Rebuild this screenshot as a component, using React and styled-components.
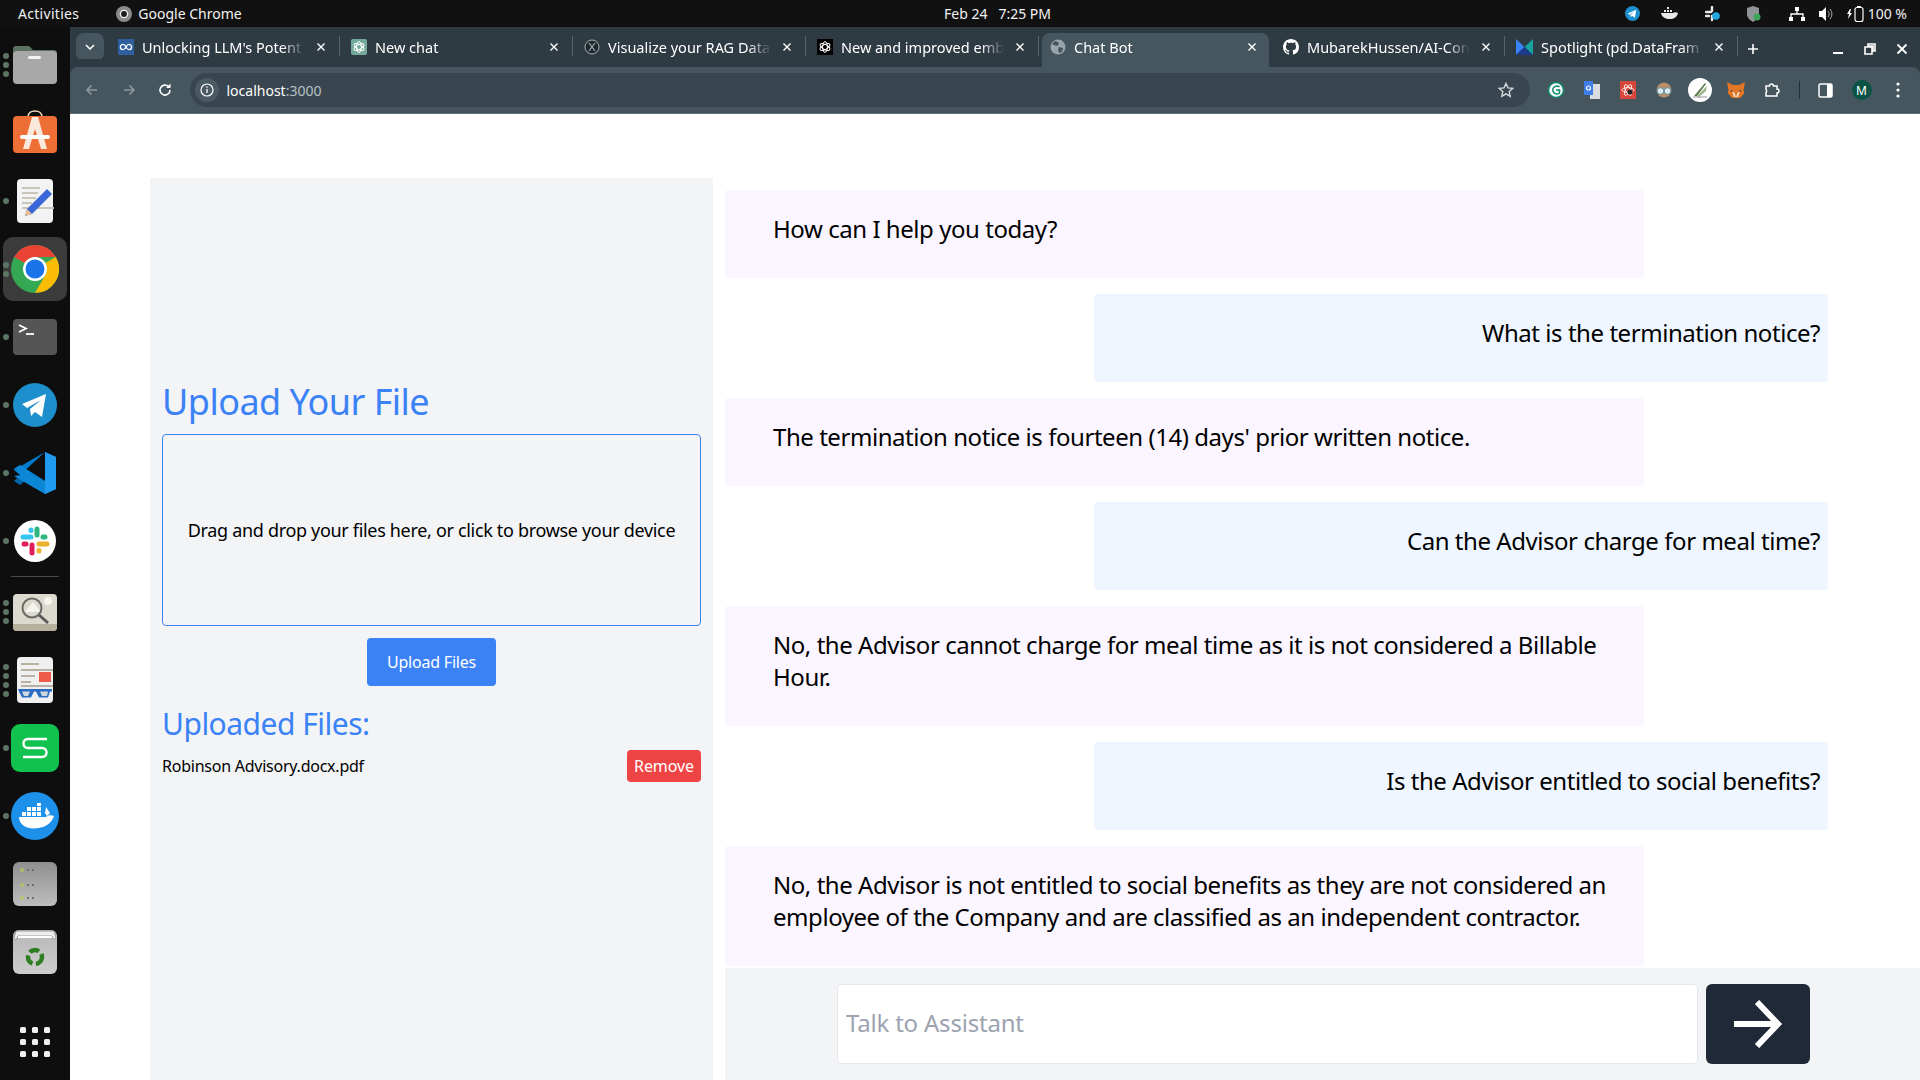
import styled, { createGlobalStyle } from 'styled-components';

const GlobalStyle = createGlobalStyle`
    html, body {
        margin: 0;
        padding: 0;
        height: 1080px;
        overflow: hidden;
        background: #ffffff;
        font-family: "Noto Sans", "Open Sans", sans-serif;
    }
    * {
        box-sizing: border-box;
    }
`

const GlobeIcon = () => (
    <svg width="16" height="16" viewBox="0 0 16 16">
        <circle cx="8" cy="8" r="7.5" fill="#9aa5ab" />
        <path d="M5 2l3 1 1 2-2 2-3-1-2-1zM9 8l4 1-1 4-3 1-1-3z" fill="#45565f" />
    </svg>
);

const OpenAiIcon = ({ bg }) => (
    <svg width="16" height="16" viewBox="0 0 16 16">
        <rect width="16" height="16" rx={bg === '#000000' ? 0 : 2} fill={bg} />
        <g fill="none" stroke="#ffffff" strokeWidth="1">
            <ellipse cx="8" cy="8" rx="2.4" ry="5.4" />
            <ellipse cx="8" cy="8" rx="2.4" ry="5.4" transform="rotate(60 8 8)" />
            <ellipse cx="8" cy="8" rx="2.4" ry="5.4" transform="rotate(120 8 8)" />
        </g>
    </svg>
);

const InfinityIcon = () => (
    <svg width="16" height="16" viewBox="0 0 16 16">
        <rect width="16" height="16" fill="#2f5f9e" />
        <path d="M8 8c-1-2-2-2.6-3-2.6a2.6 2.6 0 000 5.2c1 0 2-.6 3-2.6s2-2.6 3-2.6a2.6 2.6 0 010 5.2c-1 0-2-.6-3-2.6z" fill="none" stroke="#ffffff" strokeWidth="1.3" />
    </svg>
);

const XIcon = () => (
    <svg width="16" height="16" viewBox="0 0 16 16">
        <circle cx="8" cy="8" r="7" fill="#20282e" stroke="#aab2b7" strokeWidth="1" />
        <path d="M5 4l6 8M11 4l-6 8" stroke="#aab2b7" strokeWidth="1.2" />
    </svg>
);

const GithubIcon = () => (
    <svg width="16" height="16" viewBox="0 0 16 16">
        <path fill="#ffffff" d="M8 0C3.58 0 0 3.58 0 8c0 3.54 2.29 6.53 5.47 7.59.4.07.55-.17.55-.38 0-.19-.01-.82-.01-1.49-2.01.37-2.53-.49-2.69-.94-.09-.23-.48-.94-.82-1.13-.28-.15-.68-.52-.01-.53.63-.01 1.08.58 1.23.82.72 1.21 1.87.87 2.33.66.07-.52.28-.87.51-1.07-1.78-.2-3.64-.89-3.64-3.95 0-.87.31-1.59.82-2.15-.08-.2-.36-1.02.08-2.12 0 0 .67-.21 2.2.82.64-.18 1.32-.27 2-.27s1.36.09 2 .27c1.53-1.04 2.2-.82 2.2-.82.44 1.1.16 1.92.08 2.12.51.56.82 1.27.82 2.15 0 3.07-1.87 3.75-3.65 3.95.29.25.54.73.54 1.48 0 1.07-.01 1.93-.01 2.2 0 .21.15.46.55.38A8.01 8.01 0 0016 8c0-4.42-3.58-8-8-8z" />
    </svg>
);

const SpotlightIcon = () => (
    <svg width="17" height="16" viewBox="0 0 17 16">
        <path d="M0 0l8.5 8L0 16z" fill="#3b82f6" />
        <path d="M17 0L8.5 8 17 16z" fill="#16a3a0" />
        <path d="M0 16l8.5-8 8.5 8z" fill="#1e3a8a" />
    </svg>
);

// titles are what the tab strip shows before it fades them out
const tabs = [
    { title: "Unlocking LLM's Potent", icon: <InfinityIcon /> },
    { title: 'New chat', icon: <OpenAiIcon bg="#74aa9c" /> },
    { title: 'Visualize your RAG Data', icon: <XIcon /> },
    { title: 'New and improved emb', icon: <OpenAiIcon bg="#000000" /> },
    { title: 'Chat Bot', icon: <GlobeIcon />, active: true },
    { title: 'MubarekHussen/AI-Con', icon: <GithubIcon /> },
    { title: 'Spotlight (pd.DataFram', icon: <SpotlightIcon /> },
];

const Tile = ({ from, to, children }) => (
    <svg width="48" height="48" viewBox="0 0 48 48">
        <defs>
            <linearGradient id={`g${from.slice(1)}`} x1="0" y1="0" x2="0" y2="1">
                <stop offset="0" stopColor={from} />
                <stop offset="1" stopColor={to} />
            </linearGradient>
        </defs>
        <rect x="2" y="2" width="44" height="44" rx="6" fill={`url(#g${from.slice(1)})`} />
        {children}
    </svg>
);

const dockApps = [
    {
        dots: 3,
        icon: (
            <svg width="48" height="48" viewBox="0 0 48 48">
                <path d="M2 8a3 3 0 013-3h13l4 4h21a3 3 0 013 3v10H2z" fill="#5c7260" />
                <rect x="2" y="10" width="44" height="33" rx="4" fill="#a8a8a8" />
                <rect x="17" y="15" width="13" height="3" rx="1.5" fill="#f2f2f2" />
            </svg>
        ),
    },
    {
        dots: 0,
        icon: (
            <svg width="48" height="48" viewBox="0 0 48 48">
                <path d="M17 8c0-8 14-8 14 0" fill="none" stroke="#f0d9b5" strokeWidth="1.600" />
                <rect x="2" y="7" width="44" height="37" rx="4" fill="#ee6f35" />
                <path d="M21 8h6l9 32h-6l-6-20-6 20h-6z" fill="#fbe9dc" />
                <rect x="9" y="26" width="30" height="4" rx="2" fill="#ffffff" />
            </svg>
        ),
    },
    {
        dots: 1,
        icon: (
            <svg width="48" height="48" viewBox="0 0 48 48">
                <rect x="6" y="2" width="36" height="44" rx="4" fill="#f3f3f3" />
                <path d="M11 11h18M11 16h16M11 21h14M11 26h10M11 31h32" stroke="#c9c5b8" strokeWidth="2" />
                <path d="M36 12l5 5-20 20-7 2 2-7z" fill="#3b66d8" />
                <path d="M16 32l5 5-7 2z" fill="#e8c08a" />
            </svg>
        ),
    },
    {
        dots: 2,
        active: true,
        icon: (
            <svg width="48" height="48" viewBox="0 0 48 48">
                <circle cx="24" cy="24" r="24" fill="#34a853" />
                <path d="M24 0a24 24 0 0120.8 12H24a12 12 0 00-10.4 6L3.2 12A24 24 0 0124 0z" fill="#ea4335" />
                <path d="M44.8 12A24 24 0 0124 48l10.4-18A12 12 0 0036 24a12 12 0 00-1.6-6z" fill="#fbbc05" />
                <circle cx="24" cy="24" r="12" fill="#ffffff" />
                <circle cx="24" cy="24" r="9.5" fill="#1a73e8" />
            </svg>
        ),
    },
    {
        dots: 1,
        icon: (
            <svg width="48" height="48" viewBox="0 0 48 48">
                <rect x="2" y="6" width="44" height="36" rx="4" fill="#555555" />
                <path d="M8 12l7 3.5-7 3.5" fill="none" stroke="#ffffff" strokeWidth="1.8" />
                <path d="M15 21h8" stroke="#ffffff" strokeWidth="1.8" />
            </svg>
        ),
    },
    {
        dots: 1,
        icon: (
            <svg width="48" height="48" viewBox="0 0 48 48">
                <circle cx="24" cy="24" r="22" fill="#1d8fcc" />
                <path d="M11 23l24-10-4 23-7-5-4 4-1-7 11-9-14 8z" fill="#ffffff" />
            </svg>
        ),
    },
    {
        dots: 1,
        icon: (
            <svg width="48" height="48" viewBox="0 0 48 48">
                <path d="M3 20l6-4 12 10-12 10-6-4 7-6z" fill="#0065a9" />
                <path d="M34 3L9 26l-6-5 0 0L34 3z" fill="#007acc" />
                <path d="M3 27l31 18 11-5V8L34 3v29L9 16l-6 4 7 6z" fill="#0b87d6" />
                <path d="M34 3l11 5v32l-11 5z" fill="#1f9cf0" />
            </svg>
        ),
    },
    {
        dots: 1,
        icon: (
            <svg width="48" height="48" viewBox="0 0 48 48">
                <circle cx="24" cy="24" r="21" fill="#ffffff" />
                <path d="M26 18V12" stroke="#2eb67d" strokeWidth="5" strokeLinecap="round" />
                <path d="M32 20h2" stroke="#2eb67d" strokeWidth="5" strokeLinecap="round" />
                <path d="M28 27h8" stroke="#ecb22e" strokeWidth="5" strokeLinecap="round" />
                <path d="M28 34v-.5" stroke="#ecb22e" strokeWidth="5" strokeLinecap="round" />
                <path d="M21 28v8" stroke="#e01e5a" strokeWidth="5" strokeLinecap="round" />
                <path d="M13 27h2" stroke="#e01e5a" strokeWidth="5" strokeLinecap="round" />
                <path d="M12 20h8" stroke="#36c5f0" strokeWidth="5" strokeLinecap="round" />
                <path d="M20 13v.5" stroke="#36c5f0" strokeWidth="5" strokeLinecap="round" />
            </svg>
        ),
    },
    { divider: true },
    {
        dots: 3,
        icon: (
            <svg width="48" height="48" viewBox="0 0 48 48">
                <rect x="2" y="6" width="44" height="37" rx="4" fill="#dcdace" />
                <path d="M2 36h44v3a4 4 0 01-4 4H6a4 4 0 01-4-4z" fill="#b5b19e" />
                <path d="M14 24l8-10 8 10z" fill="#f5f5f0" />
                <circle cx="37" cy="13" r="4" fill="#f5f5f0" />
                <circle cx="21" cy="20" r="9.5" fill="none" stroke="#6a6a66" strokeWidth="2" />
                <path d="M28 27l9 8" stroke="#5a5a56" strokeWidth="3" />
            </svg>
        ),
    },
    {
        dots: 4,
        icon: (
            <svg width="48" height="48" viewBox="0 0 48 48">
                <rect x="6" y="1" width="36" height="46" rx="4" fill="#f0f0f0" />
                <path d="M10 8h18M10 14h32M10 20h14M10 26h10M10 30h32" stroke="#b9b2a4" strokeWidth="2" />
                <rect x="28" y="16" width="12" height="10" fill="#ef5b4b" />
                <path d="M7 33h34v2.500h-2l-2 6H28l-3-6h-2l-3 6H11l-3-6z" fill="#2b6cc4" />
                <path d="M11 35.500h8l-2 4.500h-4zM29 35.500h8l-1 4.500h-5z" fill="#cfd8dc" />
            </svg>
        ),
    },
    {
        dots: 1,
        icon: (
            <svg width="48" height="48" viewBox="0 0 48 48">
                <rect width="48" height="48" rx="9" fill="#12c24f" />
                <path d="M36 15H17c-6 0-6 9 0 9h14c6 0 6 9 0 9H12" fill="none" stroke="#ffffff" strokeWidth="2.400" />
            </svg>
        ),
    },
    {
        dots: 1,
        icon: (
            <svg width="48" height="48" viewBox="0 0 48 48">
                <circle cx="24" cy="24" r="24" fill="#1d91ea" />
                <path d="M8 25h27c2-2 5-2 8-1-2 6-6 9-11 11-6 2-15 2-19-1-3-2-5-5-5-9z" fill="#ffffff" />
                <path d="M11 20h4v4h-4zM16 20h4v4h-4zM21 20h4v4h-4zM26 20h4v4h-4zM16 15h4v4h-4zM21 15h4v4h-4zM26 15h4v4h-4zM26 11h4v3h-4zM35 15l4 6-3 3-2-3z" fill="#ffffff" />
            </svg>
        ),
    },
    {
        dots: 0,
        icon: (
            <Tile from="#8f8f8f" to="#bdbdbd">
                <g fill="none" stroke="#b8d050" strokeWidth="1">
                    <circle cx="11" cy="10" r="1.5" />
                    <circle cx="11" cy="25" r="1.5" />
                    <circle cx="11" cy="38" r="1.5" />
                </g>
                <path d="M16 10h2M21 10h2M16 25h2M21 25h2M16 38h2M21 38h2" stroke="#6e6e6e" strokeWidth="2" />
            </Tile>
        ),
    },
    {
        dots: 0,
        icon: (
            <Tile from="#b8b8b8" to="#cdcdcd">
                <path d="M5 3h38l2 7-2 2-2-4H7l-2 4-2-2z" fill="#ededed" stroke="#8a8a8a" strokeWidth=".8" />
                <path d="M7 8h34v2H7z" fill="#ffffff" />
                <g fill="none" stroke="#2e7d23" strokeWidth="4.500" strokeDasharray="10 3.500">
                    <circle cx="24" cy="29" r="7" />
                </g>
            </Tile>
        ),
    },
];

const TrayIcons = () => (
    <Tray>
        <TraySlot>
            <svg width="15" height="15" viewBox="0 0 16 16">
                <circle cx="8" cy="8" r="8" fill="#1d8fcc" />
                <path d="M3 8l9-4-1.5 8.5-3-2-1.5 1.5-.3-2.5 4-3.2-5.2 3z" fill="#ffffff" />
            </svg>
        </TraySlot>
        <TraySlot $gap="13">
            <svg width="17" height="13" viewBox="0 0 17 13">
                <path d="M0 6h12c1.500-1 3-1 5 0-1 4-4 6-8 6-5 0-8-2-9-6z" fill="#e8e8e8" />
                <path d="M3 3h2v2H3zM6 3h2v2H6zM9 3h2v2H9zM6 0h2v2H6z" fill="#e8e8e8" />
            </svg>
        </TraySlot>
        <TraySlot $gap="19">
            <svg width="15" height="16" viewBox="0 0 15 16">
                <path d="M1 6h5M7 1v4M1 10h3M7 10v4" stroke="#e8e8e8" strokeWidth="2.400" strokeLinecap="round" />
                <circle cx="11" cy="10" r="3.800" fill="#22a7e0" />
            </svg>
        </TraySlot>
        <TraySlot $gap="17">
            <svg width="14" height="16" viewBox="0 0 14 16">
                <path d="M6 0l6 2v6c0 4-3 6-6 8-3-2-6-4-6-8V2z" fill="#8f9498" />
                <circle cx="10" cy="11" r="3.500" fill="#3aa655" />
            </svg>
        </TraySlot>
        <TraySlot $gap="19">
            <svg width="16" height="16" viewBox="0 0 16 16">
                <path d="M6 1h4v4H6zM0 11h4v4H0zM12 11h4v4h-4z" fill="#ffffff" />
                <path d="M8 5v3M2 11V8h12v3" fill="none" stroke="#ffffff" strokeWidth="1.300" />
            </svg>
        </TraySlot>
        <TraySlot $gap="5">
            <svg width="14" height="16" viewBox="0 0 14 16">
                <path d="M0 5h3l4-4v14l-4-4H0z" fill="#ffffff" />
                <path d="M9 5c1.500 2 1.500 4 0 6M11 3c2.500 3 2.500 7 0 10" fill="none" stroke="#b0b0b0" strokeWidth="1" />
            </svg>
        </TraySlot>
        <TraySlot $gap="6">
            <svg width="18" height="16" viewBox="0 0 18 16">
                <path d="M3 3L0 8h2l-1 5 4-6H3l1-4z" fill="#ffffff" />
                <rect x="8" y="1.500" width="8" height="14" rx="2" fill="none" stroke="#ffffff" strokeWidth="1.200" />
                <rect x="10" y="0" width="4" height="2" fill="#ffffff" />
            </svg>
        </TraySlot>
        <BarText>100 %</BarText>
    </Tray>
);

const extensions = [
    <svg key="g" width="18" height="18" viewBox="0 0 18 18">
        <circle cx="9" cy="9" r="7.500" fill="#ffffff" stroke="#0f8a6d" strokeWidth="1.500" />
        <path d="M12.500 6a4 4 0 100 6V9H9" fill="none" stroke="#0f8a6d" strokeWidth="1.600" />
    </svg>,
    <svg key="t" width="16" height="18" viewBox="0 0 16 18">
        <rect x="6" y="3" width="10" height="15" fill="#d9dde0" />
        <path d="M0 0h9v14H0z" fill="#3f7ee8" />
        <circle cx="4.500" cy="7" r="2" fill="none" stroke="#ffffff" strokeWidth="1.200" />
    </svg>,
    <svg key="r" width="16" height="18" viewBox="0 0 16 18">
        <rect width="16" height="18" fill="#d8453a" />
        <g fill="none" stroke="#ffffff" strokeWidth=".8">
            <ellipse cx="8" cy="9" rx="6" ry="2.400" />
            <ellipse cx="8" cy="9" rx="6" ry="2.400" transform="rotate(60 8 9)" />
            <ellipse cx="8" cy="9" rx="6" ry="2.400" transform="rotate(120 8 9)" />
        </g>
        <circle cx="10" cy="11" r="2.500" fill="#222222" />
    </svg>,
    <svg key="o" width="16" height="16" viewBox="0 0 16 16">
        <circle cx="8" cy="8" r="7.500" fill="#b98f6a" />
        <circle cx="4.500" cy="9" r="3.300" fill="#dfe8ec" stroke="#5f93a8" />
        <circle cx="11.500" cy="9" r="3.300" fill="#dfe8ec" stroke="#5f93a8" />
    </svg>,
    <svg key="w" width="24" height="24" viewBox="0 0 24 24">
        <circle cx="12" cy="12" r="12" fill="#ffffff" />
        <path d="M6 18L17 5l1 1-9 12z" fill="#5f7a50" />
        <path d="M9 18L19 8l-1 5-7 6z" fill="#9db58c" />
        <path d="M5 19h14" stroke="#7a7a7a" strokeWidth=".8" />
    </svg>,
    <svg key="f" width="18" height="18" viewBox="0 0 18 18">
        <path d="M0 1l6 3h6l6-3-1.500 8 .9 3-4 5H5l-4.400-5 .9-3z" fill="#e27625" />
        <path d="M5 10l2.500 2L9 16l1.500-4L13 10l-2 6H7z" fill="#f5e0cc" />
        <path d="M4 9l2 1-1.500 1zM14 9l-2 1 1.500 1z" fill="#233447" />
    </svg>,
];

const SmallArrow = ({ flip, dim }) => (
    <svg width="16" height="16" viewBox="0 0 16 16" style={flip ? { transform: 'scaleX(-1)' } : undefined}>
        <path d="M13 8H3M7.500 3.500L3 8l4.500 4.500" fill="none" stroke={dim ? '#8d999f' : '#ffffff'} strokeWidth="1.600" />
    </svg>
);

const App = () => {
    return (
        <>
            <GlobalStyle />
            <Screen>
                <TopBar>
                    <TopLeft>
                        <ActivitiesText>Activities</ActivitiesText>
                        <AppName>
                            <svg width="16" height="16" viewBox="0 0 16 16">
                                <circle cx="8" cy="8" r="8" fill="#8a8a8a" />
                                <circle cx="8" cy="8" r="3.600" fill="#1c1c1c" stroke="#f0f0f0" strokeWidth="1.400" />
                            </svg>
                            <BarText>Google Chrome</BarText>
                        </AppName>
                    </TopLeft>
                    <Clock>Feb 24 &nbsp; 7:25 PM</Clock>
                    <TrayIcons />
                </TopBar>
                <Desktop>
                    <Dock>
                        {dockApps.map((app, i) =>
                            app.divider ? (
                                <DockDivider key={i} />
                            ) : (
                                <DockSlot key={i} $active={app.active}>
                                    <DockDots>
                                        {Array.from({ length: app.dots }).map((_, d) => <DockDot key={d} />)}
                                    </DockDots>
                                    {app.icon}
                                </DockSlot>
                            )
                        )}
                        <GridSlot>
                            <svg width="30" height="30" viewBox="0 0 30 30" fill="#f0f0f0">
                                {[0, 12, 24].map((y) =>
                                    [0, 12, 24].map((x) => <rect key={`${x}-${y}`} x={x} y={y} width="6" height="6" rx="1.500" />)
                                )}
                            </svg>
                        </GridSlot>
                    </Dock>
                    <Browser>
                        <TabStrip>
                            <TabSearch>
                                <svg width="10" height="6" viewBox="0 0 10 6">
                                    <path d="M1 1l4 4 4-4" fill="none" stroke="#ffffff" strokeWidth="1.500" />
                                </svg>
                            </TabSearch>
                            {tabs.map((tab) => (
                                <Tab key={tab.title} $active={tab.active}>
                                    {tab.icon}
                                    <TabTitle>{tab.title}</TabTitle>
                                    <TabClose>
                                        <svg width="10" height="10" viewBox="0 0 10 10">
                                            <path d="M1.500 1.500l7 7M8.500 1.500l-7 7" stroke="#ffffff" strokeWidth="1.400" />
                                        </svg>
                                    </TabClose>
                                </Tab>
                            ))}
                            <NewTab>
                                <svg width="12" height="12" viewBox="0 0 12 12">
                                    <path d="M6 1v10M1 6h10" stroke="#ffffff" strokeWidth="1.600" />
                                </svg>
                            </NewTab>
                            <WindowControls>
                                <svg width="12" height="12" viewBox="0 0 12 12">
                                    <path d="M1 10h10" stroke="#ffffff" strokeWidth="2" />
                                </svg>
                                <svg width="12" height="12" viewBox="0 0 12 12">
                                    <path d="M4 1h7v7H9V3H4zM1 4h7v7H1z" fill="none" stroke="#ffffff" strokeWidth="1.600" />
                                </svg>
                                <svg width="12" height="12" viewBox="0 0 12 12">
                                    <path d="M1.500 1.500l9 9M10.500 1.500l-9 9" stroke="#ffffff" strokeWidth="1.800" />
                                </svg>
                            </WindowControls>
                        </TabStrip>
                        <Toolbar>
                            <NavButtons>
                                <NavButton><SmallArrow dim /></NavButton>
                                <NavButton><SmallArrow flip dim /></NavButton>
                                <NavButton>
                                    <svg width="16" height="16" viewBox="0 0 16 16">
                                        <path d="M13 8a5 5 0 11-1.500-3.500" fill="none" stroke="#ffffff" strokeWidth="1.600" />
                                        <path d="M13.500 1.500v4.500H9z" fill="#ffffff" />
                                    </svg>
                                </NavButton>
                            </NavButtons>
                            <Omnibox>
                                <InfoChip>
                                    <svg width="14" height="14" viewBox="0 0 14 14">
                                        <circle cx="7" cy="7" r="6" fill="none" stroke="#ffffff" strokeWidth="1.200" />
                                        <path d="M7 6v4M7 3.500v1.300" stroke="#ffffff" strokeWidth="1.300" />
                                    </svg>
                                </InfoChip>
                                <Url>localhost<UrlPort>:3000</UrlPort></Url>
                                <StarButton>
                                    <svg width="16" height="16" viewBox="0 0 16 16">
                                        <path d="M8 1.500l2 4.400 4.800.5-3.600 3.200 1 4.700L8 11.900 3.800 14.300l1-4.700L1.200 6.400 6 5.900z" fill="none" stroke="#d5dadd" strokeWidth="1.400" />
                                    </svg>
                                </StarButton>
                            </Omnibox>
                            <Extensions>
                                {extensions.map((ext) => <ExtSlot key={ext.key}>{ext}</ExtSlot>)}
                                <ExtSlot>
                                    <svg width="16" height="16" viewBox="0 0 16 16">
                                        <path d="M2 4h3.500a2 2 0 014 0H13v3a2 2 0 010 4v3H2v-3.500a2 2 0 000-3z" fill="none" stroke="#ffffff" strokeWidth="1.500" />
                                    </svg>
                                </ExtSlot>
                                <ToolDivider />
                                <ExtSlot>
                                    <svg width="15" height="15" viewBox="0 0 15 15">
                                        <rect x="1" y="1" width="13" height="13" rx="1.500" fill="none" stroke="#ffffff" strokeWidth="1.500" />
                                        <rect x="9" y="1" width="5" height="13" fill="#ffffff" />
                                    </svg>
                                </ExtSlot>
                                <ExtSlot><Avatar>M</Avatar></ExtSlot>
                                <ExtSlot>
                                    <svg width="4" height="16" viewBox="0 0 4 16" fill="#ffffff">
                                        <circle cx="2" cy="2" r="1.600" />
                                        <circle cx="2" cy="8" r="1.600" />
                                        <circle cx="2" cy="14" r="1.600" />
                                    </svg>
                                </ExtSlot>
                            </Extensions>
                        </Toolbar>
                        <Page>
                            <UploadPanel>
                                <UploadTitle>Upload Your File</UploadTitle>
                                <DropZone>Drag and drop your files here, or click to browse your device</DropZone>
                                <UploadButton>Upload Files</UploadButton>
                                <UploadedTitle>Uploaded Files:</UploadedTitle>
                                <FileRow>
                                    <span>Robinson Advisory.docx.pdf</span>
                                    <RemoveButton>Remove</RemoveButton>
                                </FileRow>
                            </UploadPanel>
                            <ChatColumn>
                                <MessageList>
                                    <Bubble>How can I help you today?</Bubble>
                                    <Bubble $user>What is the termination notice?</Bubble>
                                    <Bubble>The termination notice is fourteen (14) days' prior written notice.</Bubble>
                                    <Bubble $user>Can the Advisor charge for meal time?</Bubble>
                                    <Bubble>No, the Advisor cannot charge for meal time as it is not considered a Billable Hour.</Bubble>
                                    <Bubble $user>Is the Advisor entitled to social benefits?</Bubble>
                                    <Bubble>No, the Advisor is not entitled to social benefits as they are not considered an employee of the Company and are classified as an independent contractor.</Bubble>
                                </MessageList>
                                <InputBar>
                                    <ChatInput placeholder="Talk to Assistant" />
                                    <SendButton>
                                        <svg width="50" height="48" viewBox="0 0 50 48">
                                            <path d="M1 24h44M24 2l21 22-21 22" fill="none" stroke="#ffffff" strokeWidth="6" />
                                        </svg>
                                    </SendButton>
                                </InputBar>
                            </ChatColumn>
                        </Page>
                    </Browser>
                </Desktop>
            </Screen>
        </>
    );
}

const Screen = styled.div`
    width: 1920px;
    height: 1080px;
    display: flex;
    flex-direction: column;
    overflow: hidden;
`

const TopBar = styled.div`
    height: 27px;
    flex-shrink: 0;
    background-color: #111111;
    color: #f2f2f2;
    display: grid;
    grid-template-columns: 1fr auto 1fr;
    align-items: center;
    padding: 0 13px 0 18px;
`

const TopLeft = styled.div`
    display: flex;
    align-items: center;
    gap: 37px;
`

const AppName = styled.div`
    display: flex;
    align-items: center;
    gap: 6px;
`

const BarText = styled.span`
    font-size: 14px;
    white-space: nowrap;
`

const ActivitiesText = styled(BarText)`
    letter-spacing: .3px;
`

const Clock = styled(BarText)`
    margin-left: 70px;
`

const Tray = styled.div`
    display: flex;
    align-items: center;
    justify-content: flex-end;
`

const TraySlot = styled.div`
    width: 24px;
    margin-left: ${(p) => p.$gap || 0}px;
    display: flex;
    justify-content: center;
`

const Desktop = styled.div`
    flex: 1;
    min-height: 0;
    display: flex;
`

const Dock = styled.div`
    width: 70px;
    flex-shrink: 0;
    background-color: #0e0e0e;
    display: flex;
    flex-direction: column;
    padding: 4px 0;
`

const DockSlot = styled.div`
    position: relative;
    height: 64px;
    margin: 2px 3px;
    display: flex;
    align-items: center;
    justify-content: center;
    border-radius: 10px;
    background-color: ${(p) => (p.$active ? '#3b3b3b' : 'transparent')};
`

const DockDots = styled.div`
    position: absolute;
    left: 0;
    top: 0;
    bottom: 0;
    display: flex;
    flex-direction: column;
    justify-content: center;
    gap: 3px;
`

const DockDot = styled.span`
    width: 6px;
    height: 6px;
    border-radius: 50%;
    background-color: #5d7564;
`

const DockDivider = styled.div`
    height: 1px;
    margin: 1px 11px;
    background-color: #4a4a4a;
`

const GridSlot = styled.div`
    margin-top: auto;
    height: 68px;
    display: flex;
    align-items: center;
    justify-content: center;
`

const Browser = styled.div`
    flex: 1;
    min-width: 0;
    display: flex;
    flex-direction: column;
    background-color: #ffffff;
`

const TabStrip = styled.div`
    height: 40px;
    flex-shrink: 0;
    display: flex;
    align-items: flex-end;
    padding-left: 6px;
    background-color: #2f3b43;
`

const TabSearch = styled.div`
    width: 28px;
    height: 28px;
    margin: 0 6px 6px 0;
    border-radius: 8px;
    background-color: #45565f;
    display: flex;
    align-items: center;
    justify-content: center;
`

const Tab = styled.div`
    position: relative;
    width: ${(p) => (p.$active ? '227px' : '233px')};
    height: 34px;
    margin-right: ${(p) => (p.$active ? '6px' : '0')};
    padding: 0 ${(p) => (p.$active ? '10px' : '15px')} 6px 8px;
    display: flex;
    align-items: center;
    gap: 8px;
    color: #ffffff;
    font-size: 14.5px;
    background-color: ${(p) => (p.$active ? '#45565f' : 'transparent')};
    border-radius: 8px 8px 0 0;

    ${(p) => !p.$active && `
        &::after {
            content: '';
            position: absolute;
            right: 3px;
            top: 3px;
            height: 20px;
            width: 1px;
            background-color: #55646d;
        }
    `}
`

const TabTitle = styled.span`
    flex: 1;
    min-width: 0;
    white-space: nowrap;
    mask-image: linear-gradient(to right, #000 140px, transparent 163px);
`

const TabClose = styled.span`
    width: 14px;
    display: flex;
    align-items: center;
    justify-content: center;
`

const NewTab = styled.div`
    width: 24px;
    margin: 0 0 12px 0;
    display: flex;
    justify-content: center;
`

const WindowControls = styled.div`
    margin: 0 12px 12px auto;
    display: flex;
    align-items: center;
    gap: 20px;
`

const Toolbar = styled.div`
    height: 47px;
    flex-shrink: 0;
    display: flex;
    align-items: center;
    background-color: #45565f;
    border-bottom: 1px solid #5c6d76;
    border-radius: 8px 8px 0 0;
    box-shadow: 0 -8px 0 #2f3b43;
`

const NavButtons = styled.div`
    display: flex;
    align-items: center;
    padding-left: 4px;
`

const NavButton = styled.div`
    width: 36.5px;
    display: flex;
    justify-content: center;
`

const Omnibox = styled.div`
    width: 1340px;
    height: 34px;
    margin-left: 6px;
    padding: 0 16px 0 5px;
    display: flex;
    align-items: center;
    border-radius: 17px;
    background-color: #39464f;
`

const InfoChip = styled.div`
    width: 24px;
    height: 24px;
    border-radius: 50%;
    background-color: #4a5a63;
    display: flex;
    align-items: center;
    justify-content: center;
`

const Url = styled.span`
    margin-left: 8px;
    font-size: 14px;
    color: #ffffff;
`

const UrlPort = styled.span`
    color: #b7c0c5;
`

const StarButton = styled.div`
    margin-left: auto;
    display: flex;
`

const Extensions = styled.div`
    display: flex;
    align-items: center;
    margin-left: 8px;
`

const ExtSlot = styled.div`
    width: 36px;
    display: flex;
    align-items: center;
    justify-content: center;
`

const ToolDivider = styled.div`
    width: 1px;
    height: 18px;
    margin: 0 8px 0 9px;
    background-color: #263037;
`

const Avatar = styled.span`
    width: 20px;
    height: 20px;
    border-radius: 50%;
    background-color: #0b5345;
    color: #ffffff;
    font-size: 12px;
    display: flex;
    align-items: center;
    justify-content: center;
`

const Page = styled.div`
    flex: 1;
    min-height: 0;
    display: flex;
    gap: 12px;
    padding: 64px 0 0 80px;
    background-color: #ffffff;
`

const UploadPanel = styled.div`
    width: 563px;
    flex-shrink: 0;
    padding: 204px 12px 0 12px;
    display: flex;
    flex-direction: column;
    background-color: #f3f4f6;
`

const UploadTitle = styled.h2`
    margin: 0 0 12px 0;
    font-size: 36px;
    line-height: 40px;
    font-weight: 400;
    letter-spacing: -.53px;
    color: #3b82f6;
`

const DropZone = styled.div`
    height: 192px;
    border: 1px solid #3b82f6;
    border-radius: 4px;
    display: flex;
    align-items: center;
    justify-content: center;
    font-size: 18px;
    letter-spacing: -.32px;
    color: #000000;
`

const UploadButton = styled.button`
    align-self: center;
    width: 129px;
    height: 48px;
    margin-top: 12px;
    border: none;
    border-radius: 4px;
    background-color: #3b82f6;
    color: #ffffff;
    font-family: inherit;
    font-size: 16px;
    letter-spacing: -.2px;
`

const UploadedTitle = styled.h3`
    margin: 20px 0 8px 0;
    font-size: 30px;
    line-height: 36px;
    font-weight: 400;
    letter-spacing: -.5px;
    color: #3b82f6;
`

const FileRow = styled.div`
    display: flex;
    align-items: center;
    justify-content: space-between;
    font-size: 16px;
    letter-spacing: -.24px;
    color: #000000;
`

const RemoveButton = styled.button`
    width: 74px;
    height: 32px;
    border: none;
    border-radius: 4px;
    background-color: #ef4444;
    color: #ffffff;
    font-family: inherit;
    font-size: 16px;
    letter-spacing: -.1px;
`

const ChatColumn = styled.div`
    flex: 1;
    min-width: 0;
    display: flex;
    flex-direction: column;
`

const MessageList = styled.div`
    flex: 1;
    min-height: 0;
    padding: 12px 92px 0 0;
    display: flex;
    flex-direction: column;
    gap: 16px;
`

const Bubble = styled.div`
    width: ${(p) => (p.$user ? '734px' : '919px')};
    align-self: ${(p) => (p.$user ? 'flex-end' : 'flex-start')};
    padding: ${(p) => (p.$user ? '23px 8px 33px 8px' : '23px 16px 33px 48px')};
    text-align: ${(p) => (p.$user ? 'right' : 'left')};
    background-color: ${(p) => (p.$user ? '#eff6ff' : '#faf5ff')};
    border-radius: 4px;
    font-size: 24px;
    line-height: 32px;
    letter-spacing: -.45px;
    color: #000000;
`

const InputBar = styled.div`
    height: 112px;
    flex-shrink: 0;
    padding: 16px 110px 16px 112px;
    display: flex;
    gap: 8px;
    background-color: #f3f4f6;
`

const ChatInput = styled.input`
    flex: 1;
    min-width: 0;
    height: 80px;
    padding: 0 8px 4px 8px;
    border: 1px solid #e5e7eb;
    border-radius: 4px;
    background-color: #ffffff;
    font-family: inherit;
    font-size: 24px;
    letter-spacing: -.2px;

    &::placeholder {
        color: #9ca3af;
    }
`

const SendButton = styled.button`
    width: 104px;
    height: 80px;
    border: none;
    border-radius: 6px;
    background-color: #1f2937;
    display: flex;
    align-items: center;
    justify-content: center;
`

export default App;
